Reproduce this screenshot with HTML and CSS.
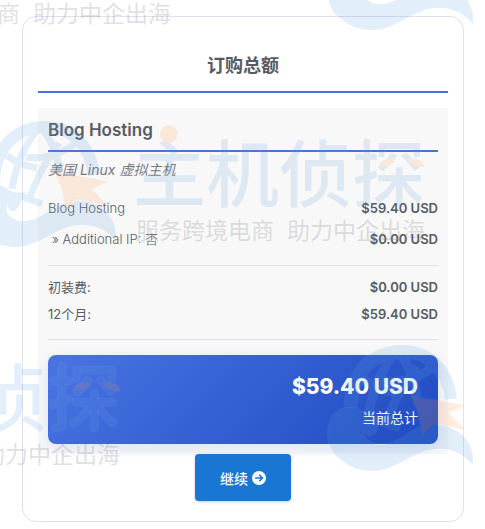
FILE: index.html
```
<!DOCTYPE html>
<html lang="zh-CN">
<head>
  <meta charset="UTF-8" />
  <meta name="viewport" content="width=device-width,initial-scale=1" />
  <title>订购总额</title>
  <link rel="stylesheet" href="styles.css">
</head>
<body>
  <main class="order-summary">
    <h2 class="summary-title">订购总额</h2>
    <div class="summary-container">
      <h3 class="product-name">Blog Hosting</h3>
      <p class="product-group">美国 Linux 虚拟主机</p>
      <div class="items">
        <div class="row item"><span>Blog Hosting</span><span class="price">$59.40 USD</span></div>
        <div class="row item"><span class="option">» Additional IP: 否</span><span class="price">$0.00 USD</span></div>
      </div>
      <div class="fees">
        <div class="row fee"><span>初装费:</span><span class="price">$0.00 USD</span></div>
        <div class="row fee"><span>12个月:</span><span class="price">$59.40 USD</span></div>
      </div>
      <div class="total">
        <div class="amount">$59.40 USD</div>
        <div class="total-label">当前总计</div>
      </div>
    </div>
    <button class="continue-btn" type="button">
      继续
      <svg class="btn-icon" viewBox="0 0 14 14" aria-hidden="true">
        <circle cx="7" cy="7" r="7" fill="#fff"/>
        <path d="M3.2 7h7M7.2 3.8 10.4 7l-3.2 3.2" fill="none" stroke="#1976d2" stroke-width="1.6"/>
      </svg>
    </button>
  </main>

  <!-- Водяной знак поверх страницы -->
  <svg class="watermark" width="485" height="529" aria-hidden="true">
    <defs>
      <g id="mascot" class="wm-mark">
        <path class="wm-line wm-ring" d="M23 62C23 28 44 6 74 6c26 0 45 17 49 48"/>
        <path class="wm-line" d="M66 9C54 24 45 44 41 68M72 9c6 8 13 18 17 42M35 34c8 6 19 11 31 13M55 36c16 3 36-3 50-14M88 22C78 38 66 52 58 80M47 74l24 9"/>
        <path class="wm-blue" d="M37 68C26 60 12 61 5 71 1 77 0 84 0 91c1 12 5 18 12 23 10 9 21 12 33 12 15 0 27-9 40-15 12-6 25-10 40-5 9 3 15 8 20 14 1-15-4-24-12-31-12-10-28-12-42-6-9 4-14 8-23 13-8 4-18 6-25 2-7-3-9-9-6-16-1 8 5 11 9 6 5-6 3-13 10-18-7 3-14 2-19-2Z"/>
        <path class="wm-orange" d="M83 50c9 4 16 5 24 5l30 5-16 8 16 17-31-7-12 13c0-16-4-26-11-41Z"/>
      </g>
      <g id="wordmark">
        <g class="wm-mark">
          <text class="wm-name" x="133" y="201">主机侦探</text>
          <circle class="wm-orange" cx="169" cy="134" r="9"/>
          <path class="wm-orange" d="M378 167q5-11 18-8-5 9-18 8ZM425 167q-5-11-18-8 5 9 18 8Z"/>
        </g>
        <text class="wm-slogan" x="136" y="239">服务跨境电商</text>
        <text class="wm-slogan" x="287" y="239">助力中企出海</text>
      </g>
    </defs>
    <use href="#mascot" x="-29" y="121"/>
    <use href="#wordmark"/>
    <use href="#mascot" x="328" y="-96"/>
    <use href="#wordmark" x="-254" y="-217"/>
    <use href="#mascot" x="328" y="345"/>
    <use href="#wordmark" x="-305" y="224"/>
  </svg>
</body>
</html>
```
FILE: styles.css
```
/* Общие стили */
* { box-sizing: border-box; }
body { margin: 0; padding: 16px 21px 7px 22px; background: #fff; color: #565b65; font-family: Inter, "Noto Sans CJK SC", sans-serif; font-size: 13px; }
h2, h3, p { margin: 0; }

/* Карточка заказа */
.order-summary { padding: 15px 15px 20px; border: 1px solid #e0e0f2; border-radius: 14px; text-align: center; }
.summary-title { padding: 19px 0 10px; border-bottom: 2px solid #4672df; font-size: 18px; font-weight: 700; line-height: 30px; }
.summary-container { margin-top: 15px; padding: 10px; background: #f8f8f8; text-align: left; }
.product-name { padding-bottom: 8px; border-bottom: 2px solid #4672df; font-size: 17px; font-weight: 600; line-height: 24px; }
.product-group { margin: 8px 0 12px; color: #777b84; font-size: 14px; font-style: italic; font-weight: 400; line-height: 20px; }

/* Строки с ценами */
.row { display: flex; justify-content: space-between; align-items: center; }
.item { height: 31px; font-weight: 300; }
.option { padding-left: 4px; }
.price { font-weight: 600; }
.items { padding-bottom: 11px; }
.fees { padding: 7px 0 12px; border: solid #dfe1ea; border-width: 1px 0; }
.fee { height: 27px; }

/* Итог */
.total { margin-top: 15px; padding: 15px 20px 13px; border-radius: 8px; background: linear-gradient(135deg, #4a74e2, #1f4bc2); box-shadow: 0 4px 15px rgba(70,100,220,0.15); color: #fff; text-align: right; }
.amount { font-size: 21px; font-weight: 800; line-height: 34px; }
.total-label { font-size: 14px; line-height: 27px; }

/* Кнопка */
.continue-btn { display: inline-flex; align-items: center; gap: 4px; height: 47px; padding: 0 25px; border: none; border-radius: 4px; background: #1976d2; box-shadow: 0 1px 3px rgba(70,70,200,0.3); color: #fff; font: 500 14px Inter, "Noto Sans CJK SC", sans-serif; cursor: pointer; }
.btn-icon { width: 14px; height: 14px; }

/* Водяной знак */
.watermark { position: absolute; top: 0; left: 0; pointer-events: none; }
.wm-mark { opacity: 0.17; filter: drop-shadow(0 0 1px #fff); }
.wm-blue { fill: #5b9fe0; }
.wm-line { fill: none; stroke: #5b9fe0; stroke-width: 7; }
.wm-ring { stroke-width: 12; }
.wm-orange { fill: #ff9b45; }
.wm-name { fill: #5b9fe0; font: 500 73px "Noto Sans CJK SC", sans-serif; }
.wm-slogan { fill: #777; fill-opacity: 0.24; font: 400 23px "Noto Sans CJK SC", sans-serif; }
```
